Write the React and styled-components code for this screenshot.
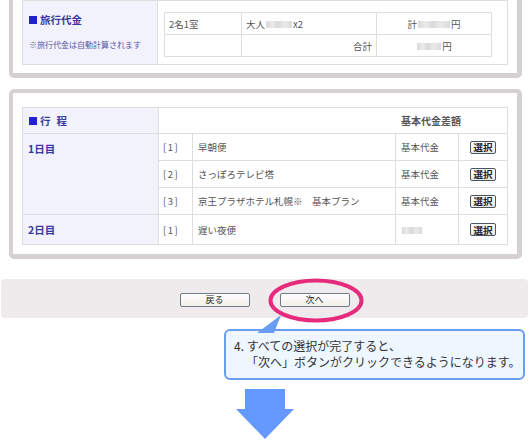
import React from "react";
import styled, { createGlobalStyle } from "styled-components";

const Global = createGlobalStyle`
  html, body {
    margin: 0;
    padding: 0;
    background: #fff;
    overflow: hidden;
  }
  body {
    font-family: "Noto Sans CJK JP", "Noto Sans", sans-serif;
    color: #555;
  }
`;

const Page = styled.div`
  width: 530px;
  height: 440px;
  overflow: hidden;
`;

const Panel = styled.div`
  margin: ${(p) => p.$top}px 8px 0 9px;
  border: 4px solid #d5d1d1;
  border-bottom-width: 5px;
  border-right-width: 5px;
  border-radius: 5px;
  background: #fff;
  padding: ${(p) => p.$pad};
`;

const Grid = styled.table`
  width: 100%;
  border-collapse: collapse;
  table-layout: fixed;
  font-size: 9.5px;
  color: #555;

  td {
    border: 1px solid #dedede;
    padding: 0 5px;
  }
`;

const Label = styled.td`
  && {
    background: #f2f2fc;
    vertical-align: ${(p) => p.$valign || "top"};
    padding: ${(p) => p.$pad || "8px 5px"};
  }
`;

const Heading = styled.div`
  font-size: 10.5px;
  font-weight: bold;
  color: #3a3a9e;
  letter-spacing: ${(p) => p.$spacing || "0"};
  display: flex;
  align-items: center;
  gap: 2px;

  &::before {
    content: "";
    display: ${(p) => (p.$square ? "block" : "none")};
    width: 8px;
    height: 8px;
    background: #2020cc;
    margin-right: 1px;
  }
`;

const Note = styled.div`
  margin-top: 12px;
  font-size: 8px;
  color: #5858a8;
`;

const Inner = styled.td`
  && {
    padding: 11px 15px 7px 6px;
    vertical-align: top;
  }
`;

const SubTable = styled.table`
  width: 100%;
  border-collapse: collapse;
  table-layout: fixed;
  font-size: 9.5px;

  tr {
    height: 22px;
  }

  td {
    border: 1px solid #dedede;
    padding: 0 4px;
  }
`;

const Cell = styled.td`
  && {
    text-align: ${(p) => p.$align || "left"};
    color: #555;
  }
`;

const Blur = styled.span`
  display: inline-block;
  width: ${(p) => p.$w}px;
  height: 7px;
  vertical-align: middle;
  background: linear-gradient(
    90deg,
    #d0d0d0 0%,
    #e6e6e6 25%,
    #cfcfcf 45%,
    #e4e4e4 70%,
    #d2d2d2 100%
  );
  opacity: 0.8;
  margin: 0 1px;
`;

const HeadRow = styled.tr`
  height: 26px;
`;

const Row = styled.tr`
  height: ${(p) => p.$h}px;
`;

const HeadCell = styled.td`
  && {
    text-align: left;
    padding-left: 242px;
    font-size: 10px;
    font-weight: bold;
    color: #555;
  }
`;

const Index = styled.td`
  && {
    letter-spacing: 1.5px;
    padding-left: 4px;
  }
`;

const Pick = styled.td`
  && {
    text-align: center;
    padding: 0;
  }
`;

const SmallBtn = styled.button`
  font-family: inherit;
  font-size: 9.5px;
  font-weight: bold;
  color: #222;
  width: 26px;
  height: 13px;
  padding: 0;
  line-height: 10px;
  border: 1px solid #4a5560;
  border-radius: 2px;
  background: linear-gradient(#ffffff, #e8e8e8);
`;

const Bar = styled.div`
  position: relative;
  margin: 20px 2px 0 1px;
  height: 39px;
  border-radius: 4px;
  background: #efebed;
  display: flex;
  justify-content: center;
  align-items: flex-start;
  gap: 30px;
  padding-top: 14px;
  box-sizing: border-box;
`;

const NavBtn = styled.button`
  font-family: inherit;
  font-size: 9px;
  color: #222;
  width: 70px;
  height: 14px;
  padding: 0;
  line-height: 10px;
  border: 1px solid #6e7b88;
  border-radius: 2px;
  background: linear-gradient(#ffffff, #f3efe9);
`;

const Ring = styled.svg`
  position: absolute;
  left: 267px;
  top: -1px;
`;

const Callout = styled.div`
  position: relative;
  margin: 11px 0 0 224px;
  width: 301px;
  height: 51px;
  box-sizing: border-box;
  border: 2px solid #6a9cf6;
  border-radius: 6px;
  background: #eef6ff;
  padding: 7px 0 0 8px;
  font-size: 12px;
  line-height: 16px;
  color: #333;
`;

const Pointer = styled.svg`
  position: absolute;
  left: 29px;
  top: -16px;
`;

const Line = styled.div`
  padding-left: ${(p) => p.$indent || 0}px;
  white-space: nowrap;
`;

const Arrow = styled.svg`
  display: block;
  margin: 9px 0 0 236px;
`;

export default function App() {
  return (
    <Page>
      <Global />
      <Panel $top={-14} $pad="10px 9px 8px 9px">
        <Grid>
          <colgroup>
            <col style={{ width: 135 }} />
            <col />
          </colgroup>
          <tbody>
            <tr>
              <Label $pad="11px 5px 6px 6px">
                <Heading $square>旅行代金</Heading>
                <Note>※旅行代金は自動計算されます</Note>
              </Label>
              <Inner>
                <SubTable>
                  <colgroup>
                    <col style={{ width: 77 }} />
                    <col style={{ width: 135 }} />
                    <col />
                  </colgroup>
                  <tbody>
                    <tr>
                      <Cell>2名1室</Cell>
                      <Cell>
                        大人<Blur $w={26} />x2
                      </Cell>
                      <Cell $align="center">
                        計<Blur $w={32} />円
                      </Cell>
                    </tr>
                    <tr>
                      <Cell />
                      <Cell $align="right">合計</Cell>
                      <Cell $align="center">
                        <Blur $w={24} />円
                      </Cell>
                    </tr>
                  </tbody>
                </SubTable>
              </Inner>
            </tr>
          </tbody>
        </Grid>
      </Panel>

      <Panel $top={11} $pad="14px 9px 9px 9px">
        <Grid>
          <colgroup>
            <col style={{ width: 136 }} />
            <col style={{ width: 34 }} />
            <col style={{ width: 203 }} />
            <col style={{ width: 63 }} />
            <col />
          </colgroup>
          <tbody>
            <HeadRow>
              <Label $pad="0 5px 0 6px" $valign="middle">
                <Heading $square $spacing="6px">
                  行程
                </Heading>
              </Label>
              <HeadCell colSpan={4}>基本代金差額</HeadCell>
            </HeadRow>
            <Row $h={27}>
              <Label rowSpan={3} $pad="7px 5px">
                <Heading>1日目</Heading>
              </Label>
              <Index>[1]</Index>
              <td>早朝便</td>
              <td>基本代金</td>
              <Pick>
                <SmallBtn>選択</SmallBtn>
              </Pick>
            </Row>
            <Row $h={27}>
              <Index>[2]</Index>
              <td>さっぽろテレビ塔</td>
              <td>基本代金</td>
              <Pick>
                <SmallBtn>選択</SmallBtn>
              </Pick>
            </Row>
            <Row $h={27}>
              <Index>[3]</Index>
              <td>京王プラザホテル札幌※　基本プラン</td>
              <td>基本代金</td>
              <Pick>
                <SmallBtn>選択</SmallBtn>
              </Pick>
            </Row>
            <Row $h={27}>
              <Label $pad="7px 5px">
                <Heading>2日目</Heading>
              </Label>
              <Index>[1]</Index>
              <td>遅い夜便</td>
              <td>
                <Blur $w={20} />
              </td>
              <Pick>
                <SmallBtn>選択</SmallBtn>
              </Pick>
            </Row>
          </tbody>
        </Grid>
      </Panel>

      <Bar>
        <NavBtn>戻る</NavBtn>
        <NavBtn>次へ</NavBtn>
        <Ring width="96" height="45" viewBox="0 0 96 45">
          <ellipse
            cx="48"
            cy="22.5"
            rx="45.5"
            ry="20"
            fill="none"
            stroke="#e62a7c"
            strokeWidth="4"
          />
        </Ring>
      </Bar>

      <Callout>
        <Pointer width="30" height="18" viewBox="0 0 30 18">
          <polygon points="26,0 2,18 19,18" fill="#6a9cf6" />
        </Pointer>
        <Line>4. すべての選択が完了すると、</Line>
        <Line $indent={12}>「次へ」ボタンがクリックできるようになります。</Line>
      </Callout>

      <Arrow width="58" height="50" viewBox="0 0 58 50">
        <polygon points="9,0 49,0 49,20 58,20 29,50 0,20 9,20" fill="#6699ff" />
      </Arrow>
    </Page>
  );
}
